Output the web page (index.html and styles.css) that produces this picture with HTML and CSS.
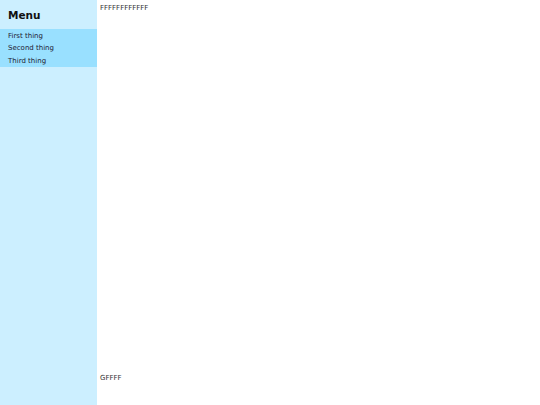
FILE: index.html
```html
<!DOCTYPE html>
<html>
<head>
<meta charset="utf-8">
<link rel="stylesheet" href="styles.css">
</head>
<body>
<div class="layout">
  <aside class="sidebar">
    <h1 class="title">Menu</h1>
    <ul class="menu">
      <li>First thing</li>
      <li>Second thing</li>
      <li>Third thing</li>
    </ul>
  </aside>
  <main class="content">
    <div class="top">FFFFFFFFFFFF</div>
    <div class="bottom">GFFFF</div>
  </main>
</div>
</body>
</html>
```
FILE: styles.css
```css
html, body {
  margin: 0;
  padding: 0;
  height: 100%;
}
body {
  font-family: "DejaVu Sans", Verdana, sans-serif;
  background: #fff;
  color: #333;
}
.layout {
  display: flex;
  height: 405px;
}
.sidebar {
  width: 97px;
  background: #ccefff;
  flex-shrink: 0;
}
.title {
  margin: 0;
  padding: 9px 8px 0 8px;
  height: 20px;
  font-size: 10.5px;
  line-height: 13px;
  font-weight: bold;
  color: #111;
}
.menu {
  list-style: none;
  margin: 0;
  padding: 1px 0 0 0;
  background: #99e0ff;
}
.menu li {
  padding: 0 8px;
  font-size: 7px;
  line-height: 12.33px;
  color: #223;
}
.content {
  flex: 1;
  display: flex;
  flex-direction: column;
  justify-content: space-between;
  padding: 4px 3px 22px 3px;
  font-size: 7px;
  line-height: 9px;
}
```
